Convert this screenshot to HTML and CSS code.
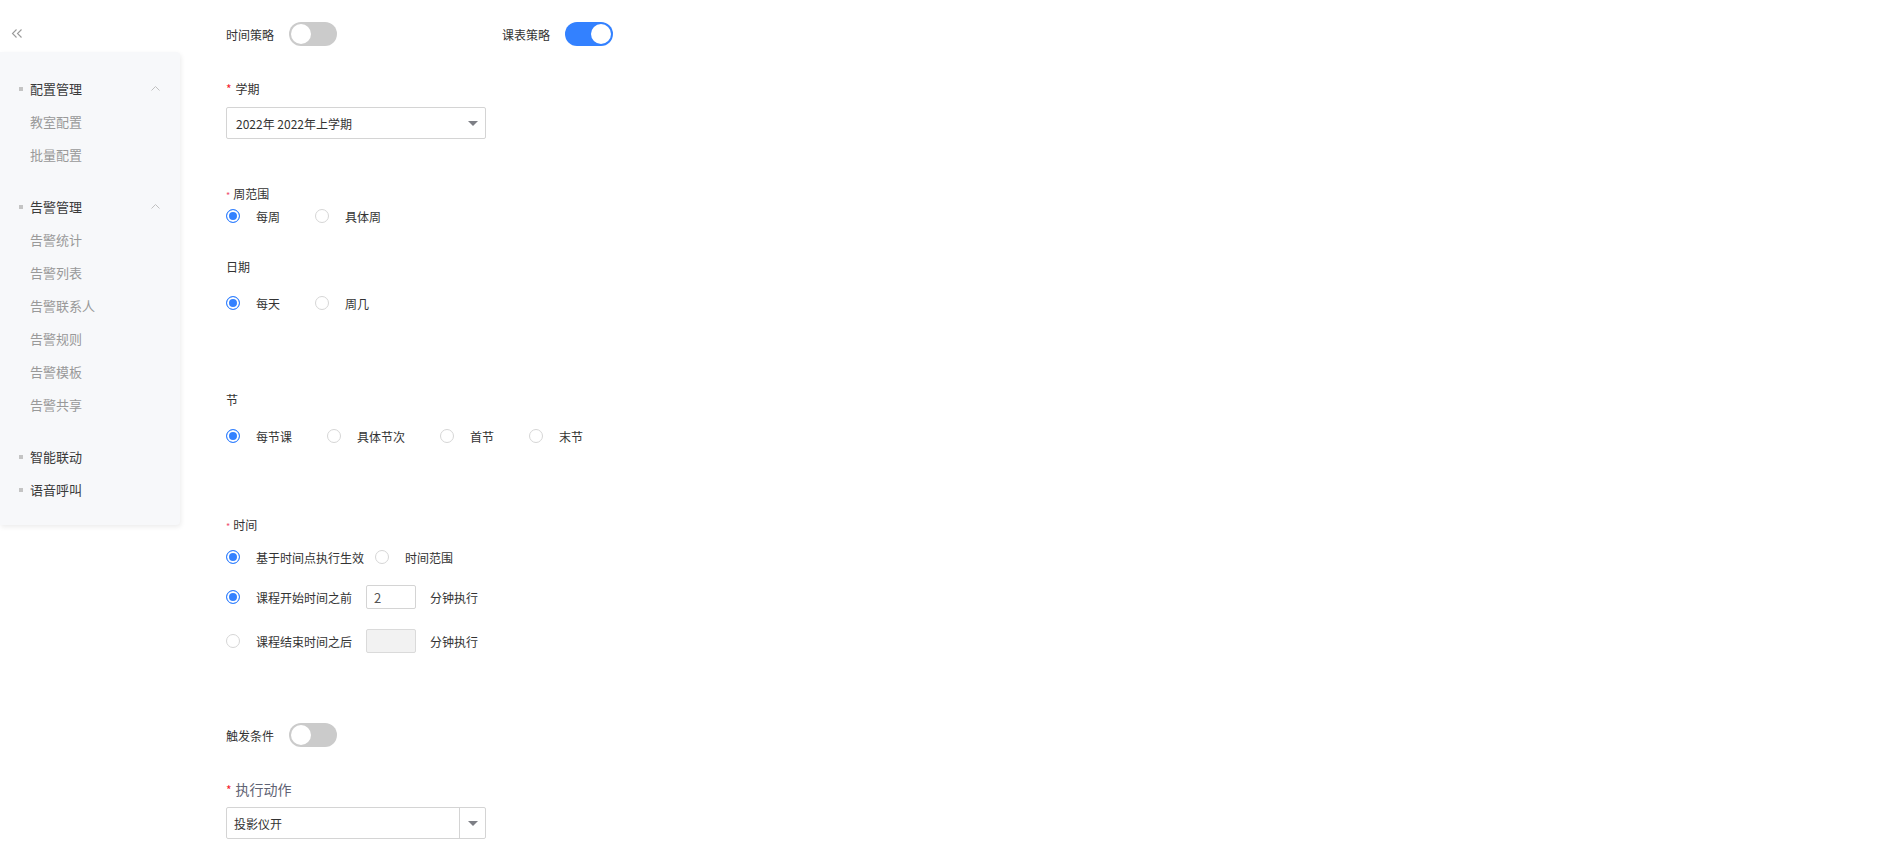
FILE: index.html
```html
<!DOCTYPE html>
<html lang="zh-CN">
<head>
    <meta charset="UTF-8">
    <meta name="viewport" content="width=device-width, initial-scale=1.0">
    <title>策略配置</title>
    <link rel="stylesheet" href="styles.css">
</head>
<body>
    <div class="layout">
        <aside class="side">
            <div class="collapse">
                <svg width="12" height="9" viewBox="0 0 12 9"><polyline points="5.5,0.5 1.5,4.5 5.5,8.5" /><polyline points="10.5,0.5 6.5,4.5 10.5,8.5" /></svg>
            </div>
            <nav class="menu">
                <div class="group">
                    <div class="menu-title"><i class="dot"></i>配置管理<svg class="arrow-up" width="9" height="5" viewBox="0 0 9 5"><polyline points="0.5,4.5 4.5,0.5 8.5,4.5" /></svg></div>
                    <div class="menu-item">教室配置</div>
                    <div class="menu-item">批量配置</div>
                </div>
                <div class="group">
                    <div class="menu-title"><i class="dot"></i>告警管理<svg class="arrow-up" width="9" height="5" viewBox="0 0 9 5"><polyline points="0.5,4.5 4.5,0.5 8.5,4.5" /></svg></div>
                    <div class="menu-item">告警统计</div>
                    <div class="menu-item">告警列表</div>
                    <div class="menu-item">告警联系人</div>
                    <div class="menu-item">告警规则</div>
                    <div class="menu-item">告警模板</div>
                    <div class="menu-item">告警共享</div>
                </div>
                <div class="menu-title"><i class="dot"></i>智能联动</div>
                <div class="menu-title"><i class="dot"></i>语音呼叫</div>
            </nav>
        </aside>

        <main class="form">
            <div class="switch-row">
                <div class="switch-item first"><span>时间策略</span><span class="switch"></span></div>
                <div class="switch-item"><span>课表策略</span><span class="switch on"></span></div>
            </div>

            <div class="label gap-33"><span class="star">*</span>学期</div>
            <div class="select gap-8">
                <span>2022年 2022年上学期</span>
                <i class="caret"></i>
            </div>

            <div class="label gap-45"><span class="star small">*</span>周范围</div>
            <div class="radio-row gap-2">
                <label class="radio checked"><i></i>每周</label>
                <label class="radio"><i></i>具体周</label>
            </div>

            <div class="label gap-31">日期</div>
            <div class="radio-row gap-16">
                <label class="radio checked"><i></i>每天</label>
                <label class="radio"><i></i>周几</label>
            </div>

            <div class="label gap-77">节</div>
            <div class="radio-row gap-16">
                <label class="radio checked"><i></i>每节课</label>
                <label class="radio"><i></i>具体节次</label>
                <label class="radio"><i></i>首节</label>
                <label class="radio"><i></i>末节</label>
            </div>

            <div class="label gap-69"><span class="star small">*</span>时间</div>
            <div class="radio-row tight gap-12">
                <label class="radio checked"><i></i>基于时间点执行生效</label>
                <label class="radio"><i></i>时间范围</label>
            </div>
            <div class="radio-row gap-18">
                <label class="radio checked"><i></i>课程开始时间之前</label>
                <input class="num" type="text" value="2">
                <span class="unit">分钟执行</span>
            </div>
            <div class="radio-row gap-20">
                <label class="radio"><i></i>课程结束时间之后</label>
                <input class="num" type="text" disabled>
                <span class="unit">分钟执行</span>
            </div>

            <div class="switch-row gap-70">
                <div class="switch-item"><span>触发条件</span><span class="switch"></span></div>
            </div>

            <div class="label big gap-32"><span class="star">*</span>执行动作</div>
            <div class="select split gap-8">
                <span>投影仪开</span>
                <span class="caret-box"><i class="caret"></i></span>
            </div>
        </main>
    </div>
</body>
</html>
```

FILE: styles.css
```css
body { margin: 0; background: #fff; color: #333; font-family: "Microsoft YaHei", "Noto Sans CJK SC", sans-serif; font-size: 12px; }
.layout { display: flex; align-items: flex-start; }

/* sidebar */
.side { width: 180px; flex-shrink: 0; }
.collapse { height: 52px; display: flex; align-items: flex-start; padding: 29px 0 0 11px; box-sizing: border-box; }
.collapse svg polyline { fill: none; stroke: #9a9a9a; stroke-width: 1.1; }
.menu { background: #f7f8fa; padding: 20px 0 19px; border-radius: 0 4px 4px 0; box-shadow: 1px 2px 5px rgba(0,0,0,0.08); }
.group { margin-bottom: 19px; }
.menu-title { height: 33px; display: flex; align-items: center; padding-left: 19px; font-size: 13px; font-weight: 400; color: #3a3a3a; }
.menu-title .dot { width: 4px; height: 4px; background: #c4c4c4; margin-right: 7px; }
.menu-item { height: 33px; line-height: 33px; padding-left: 30px; font-size: 13px; color: #999; }
.arrow-up { margin-left: auto; margin-right: 20px; }
.arrow-up polyline { fill: none; stroke: #c0c0c0; stroke-width: 1; }

/* form */
.form { padding: 22px 0 0 46px; flex: 1; }
.switch-row { display: flex; align-items: center; height: 24px; }
.switch-item { display: flex; align-items: center; }
.switch-item.first { width: 276px; }
.switch { width: 48px; height: 24px; border-radius: 12px; background: #cbcbcb; margin-left: 15px; position: relative; }
.switch::after { content: ""; position: absolute; left: 2px; top: 2px; width: 20px; height: 20px; border-radius: 50%; background: #fff; }
.switch.on { background: #3381ff; }
.switch.on::after { left: 26px; }

.label { line-height: 20px; height: 20px; color: #333; }
.label.big { font-size: 14px; color: #5f6373; }
.star { color: #f5222d; margin-right: 4px; font-size: 12px; }
.star.small { font-size: 9px; color: #f0506e; margin-right: 3px; }

.select { width: 260px; height: 32px; box-sizing: border-box; border: 1px solid #d4d4d4; border-radius: 2px; display: flex; align-items: center; padding-left: 9px; color: #333; }
.select .caret { margin-left: auto; margin-right: 7px; }
.caret { width: 0; height: 0; border-left: 5px solid transparent; border-right: 5px solid transparent; border-top: 5px solid #7d7f85; }
.select.split { padding-left: 7px; }
.caret-box { margin-left: auto; width: 25px; height: 100%; border-left: 1px solid #d4d4d4; display: flex; align-items: center; justify-content: center; }
.caret-box .caret { margin: 0; }

.radio-row { display: flex; align-items: center; min-height: 20px; }
.radio { display: flex; align-items: center; margin-right: 35px; color: #333; }
.radio-row.tight .radio { margin-right: 11px; }
.radio i { width: 14px; height: 14px; box-sizing: border-box; border: 1px solid #d6d6d6; border-radius: 50%; margin-right: 16px; background: #fff; }
.radio.checked i { border-color: #3381ff; background: #3381ff; box-shadow: inset 0 0 0 2px #fff; }
.num { width: 50px; height: 24px; box-sizing: border-box; border: 1px solid #d4d4d4; border-radius: 2px; padding: 0 7px; font: inherit; font-size: 13px; color: #555; margin-left: -21px; }
.num:disabled { background: #f2f2f2; border-color: #dadada; }
.unit { margin-left: 14px; }

.gap-2 { margin-top: 2px; }
.gap-8 { margin-top: 8px; }
.gap-12 { margin-top: 12px; }
.gap-16 { margin-top: 16px; }
.gap-18 { margin-top: 18px; }
.gap-20 { margin-top: 20px; }
.gap-31 { margin-top: 31px; }
.gap-32 { margin-top: 32px; }
.gap-33 { margin-top: 33px; }
.gap-45 { margin-top: 45px; }
.gap-69 { margin-top: 69px; }
.gap-70 { margin-top: 70px; }
.gap-77 { margin-top: 77px; }
```
